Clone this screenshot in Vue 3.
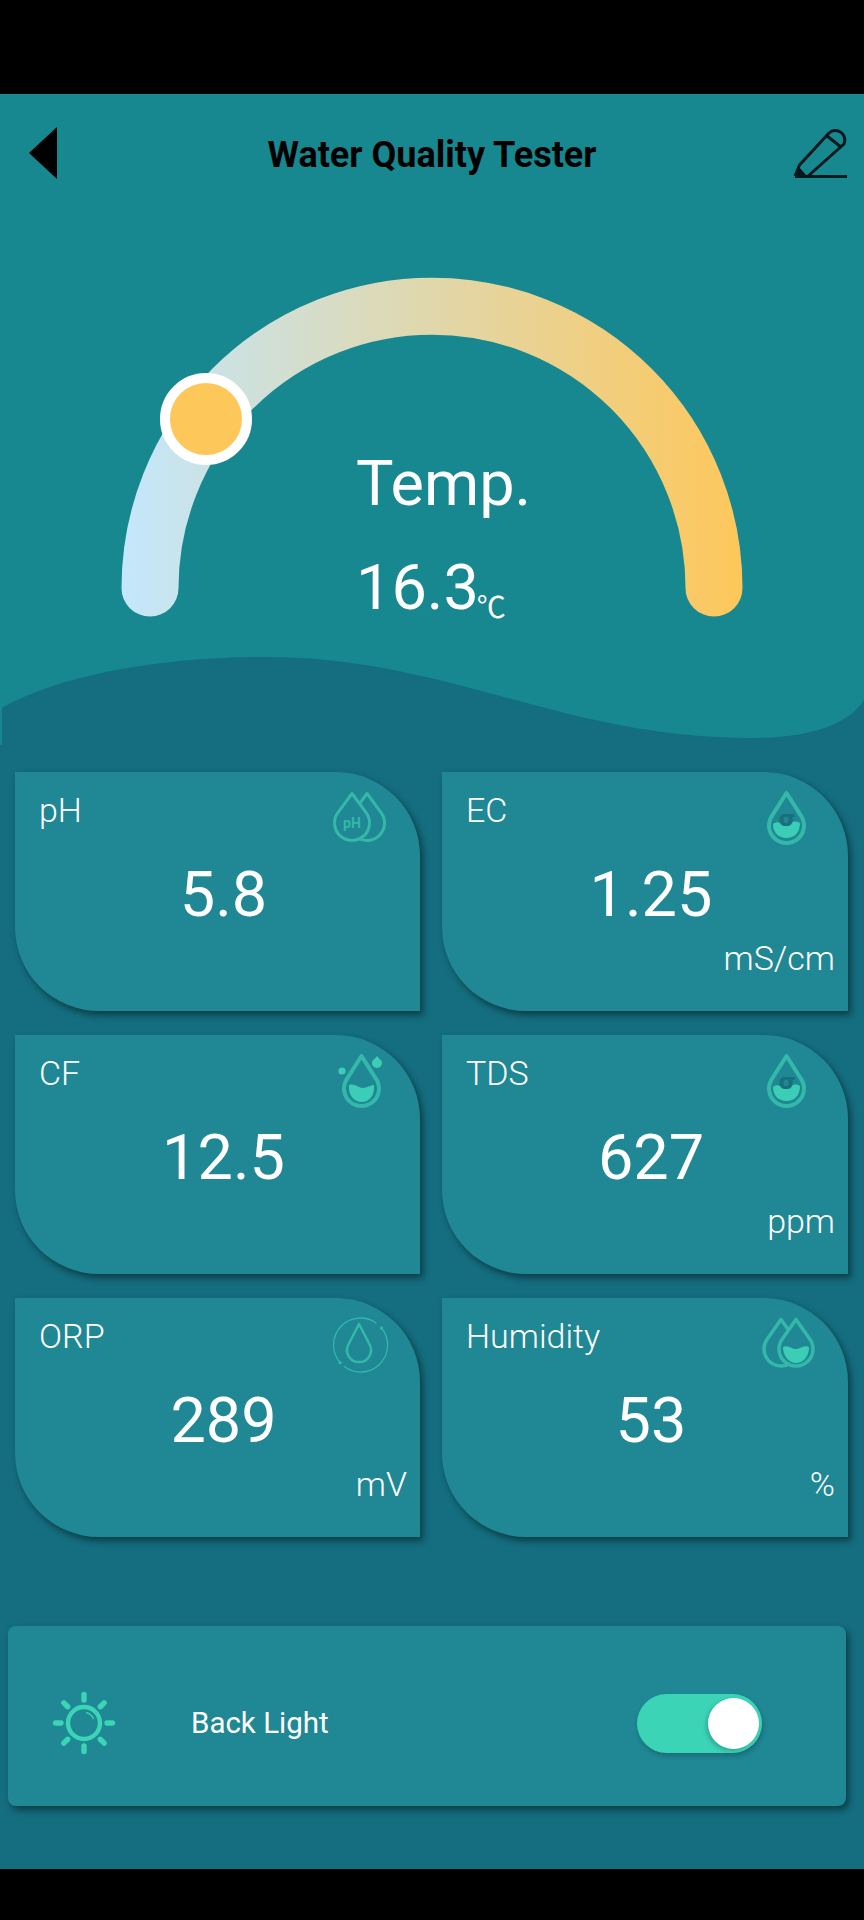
<template>
  <div class="phone">
    <div class="screen">
      <section class="hero">
        <header class="topbar">
          <svg class="back" width="28" height="52" viewBox="0 0 28 52">
            <path d="M28 0V52L0 26Z" fill="#000" />
          </svg>
          <h1>Water Quality Tester</h1>
          <svg class="edit" width="56" height="54" viewBox="794 126 56 54" fill="none" stroke="#04191c" stroke-width="3" stroke-linejoin="round">
            <path d="M796 176 L800.5 165 L830 133 A9.5 9.5 0 0 1 845 144 L808 177" />
            <path d="M828 136 L842 147 M796 176.5 H848" />
            <path d="M796 176 L800 167 L808 176Z" fill="#04191c" stroke="none" />
          </svg>
        </header>
        <div class="gauge">
          <svg width="864" height="445" viewBox="0 212 864 445">
            <defs>
              <linearGradient id="arcFill" gradientUnits="userSpaceOnUse" x1="122" y1="0" x2="743" y2="0">
                <stop offset="0" stop-color="#c3e7fc" />
                <stop offset="1" stop-color="#fec75a" />
              </linearGradient>
            </defs>
            <path d="M150 588 A282 282 0 0 1 714 588" fill="none" stroke="url(#arcFill)" stroke-width="57" stroke-linecap="round" />
            <circle cx="206" cy="419" r="41" fill="#fec75a" stroke="#fff" stroke-width="10" />
          </svg>
          <div class="readout">
            <div>Temp.</div>
            <div>16.3<span class="deg">℃</span></div>
          </div>
        </div>
      </section>

      <svg class="wave" width="864" height="115" viewBox="0 657 864 115">
        <path d="M0 657 H864 V700 C850 722 815 738 752 738 C560 738 450 657 264 657 C160 657 60 675 2 708 V745 H0 Z" fill="#17888f" />
      </svg>

      <div class="cards">
        <div class="card" v-for="c in cards" :key="c.label">
          <div class="label">{{ c.label }}</div>
          <div class="value">{{ c.value }}</div>
          <div class="unit">{{ c.unit }}</div>

          <svg class="icon" width="70" height="70" viewBox="0 0 70 70" fill="none" stroke="#33b8a9" stroke-width="3" stroke-linejoin="round">
            <template v-if="c.icon === 'ph'">
              <path d="M33.5 21.7 L41 11.5 L55.1 30.6 A17.5 17.5 0 0 1 32 56" />
              <path :d="drop(26, 11.5, 17.5, 41)" />
              <text x="26" y="46" class="ph-mark">pH</text>
            </template>

            <template v-else-if="c.icon === 'sigma'">
              <path :d="drop(32.5, 11, 17.5, 43.5)" stroke-width="4" />
              <path d="M19 42 C25 37 27 44 33 42 C38 40 41 38 46 41 C46 51 40 56 32.5 56 C25 56 19 51 19 42Z" fill="#3bcdb5" stroke="none" />
              <text x="33" y="44" class="sigma">σ</text>
            </template>

            <template v-else-if="c.icon === 'rain'">
              <path :d="drop(35.5, 11, 17.5, 43.5)" stroke-width="4" />
              <path d="M23 40 C29 38 32 43 37 43 C41 43 44 40 48 40 C49 51 43 57 35.5 57 C28 57 22 50 23 40Z" fill="#3bcdb5" stroke="none" />
              <circle cx="16" cy="26" r="3.6" fill="#3bcdb5" stroke="none" />
              <path d="M51 11 C53 14 56 15 56 18 A5 5 0 0 1 46 18 C46 15 49 14 51 11Z" fill="#3bcdb5" stroke="none" />
            </template>

            <template v-else-if="c.icon === 'ring'">
              <path :d="drop(33, 16, 12, 42)" stroke-width="2.5" />
              <path d="M50.4 15.2 A27 27 0 0 0 14.1 54.7 M17.9 58.3 A27 27 0 0 0 55.5 20" stroke-width="1.3" />
              <circle cx="14.1" cy="54.7" r="1.6" fill="#33b8a9" stroke="none" />
              <circle cx="55.5" cy="20" r="1.6" fill="#33b8a9" stroke="none" />
            </template>

            <template v-else>
              <path d="M34.5 22.1 L27 11.5 L13.1 31.2 A17 17 0 0 0 36 55.4" stroke-width="3.5" />
              <path :d="drop(42, 11.5, 17, 41)" stroke-width="3.5" />
              <path d="M29 39 C35 36 38 42 43 41 C47 40 51 37 55 39 C55 49 49 55 42 55 C35 55 29 48 29 39Z" fill="#3bcdb5" stroke="none" />
            </template>
          </svg>
        </div>
      </div>

      <div class="light-panel">
        <svg class="sun" width="64" height="64" viewBox="-32 -32 64 64" fill="none" stroke="#3bd4b6">
          <circle r="16" stroke-width="4.4" />
          <path d="M2 -10.5 A10.5 10.5 0 0 1 9.5 -4" stroke-width="1.4" />
          <g stroke-width="5.4" stroke-linecap="round">
            <path v-for="a in rays" :key="a" d="M0 -23 V-28.5" :transform="`rotate(${a})`" />
          </g>
        </svg>
        <span class="light-label">Back Light</span>
        <div class="switch">
          <div class="knob"></div>
        </div>
      </div>
    </div>
  </div>
</template>

<script setup>
const cards = [
  { label: 'pH', value: '5.8', unit: '', icon: 'ph' },
  { label: 'EC', value: '1.25', unit: 'mS/cm', icon: 'sigma' },
  { label: 'CF', value: '12.5', unit: '', icon: 'rain' },
  { label: 'TDS', value: '627', unit: 'ppm', icon: 'sigma' },
  { label: 'ORP', value: '289', unit: 'mV', icon: 'ring' },
  { label: 'Humidity', value: '53', unit: '%', icon: 'double' }
]

const rays = [0, 45, 90, 135, 180, 225, 270, 315]

// water drop outline: straight sides from the tip into a round bottom
const drop = (x, top, r, cy) => {
  const s = r / (cy - top)
  const c = Math.sqrt(1 - s * s)
  const dx = (r * c).toFixed(1)
  const y = (cy - r * s).toFixed(1)
  return `M${x} ${top} L${x - dx} ${y} A${r} ${r} 0 1 0 ${x + Number(dx)} ${y}Z`
}
</script>

<style>
body {
  background: #000;
}
</style>

<style scoped>
.phone {
  height: 1920px;
  padding: 94px 0 51px;
  box-sizing: border-box;
  background: #000;
  font-family: Roboto, "Noto Sans", sans-serif;
  color: #fff;
}
.screen {
  height: 1775px;
  background: #146e7f;
}
.hero {
  background: #17888f;
}
.topbar {
  height: 118px;
  padding: 0 16px;
  display: grid;
  grid-template-columns: 1fr auto 1fr;
  align-items: center;
}
.back {
  margin-left: 13px;
}
.edit {
  justify-self: end;
  margin-right: -1px;
}
h1 {
  margin: 4px 0 0;
  font-size: 36px;
  font-weight: 700;
  color: #000;
}
.gauge {
  position: relative;
  height: 445px;
}
.gauge svg {
  display: block;
}
.readout {
  position: absolute;
  left: 356px;
  top: 240px;
  display: flex;
  flex-direction: column;
  gap: 41px;
  font-size: 63px;
  line-height: 1;
}
.deg {
  font-family: "Noto Sans CJK SC", sans-serif;
  font-size: 29px;
  margin-left: -2px;
  line-height: 0;
  position: relative;
  top: 9px;
}
.wave {
  display: block;
}
.cards {
  padding: 0 16px 0 15px;
  display: grid;
  grid-template-columns: 405px 406px;
  column-gap: 22px;
  row-gap: 24px;
}
.card {
  position: relative;
  height: 239px;
  padding: 21px 13px 0 24px;
  box-sizing: border-box;
  background: #208794;
  border-radius: 0 84px 0 84px;
  box-shadow: 3px 4px 7px rgba(0, 0, 0, 0.45);
}
.label {
  font-size: 34px;
  line-height: 1;
  font-weight: 300;
}
.value {
  margin-top: 36px;
  margin-left: 1px;
  font-size: 63px;
  line-height: 1;
  text-align: center;
}
.unit {
  margin-top: 15px;
  min-height: 34px;
  font-size: 34px;
  line-height: 1;
  font-weight: 300;
  text-align: right;
}
.icon {
  position: absolute;
  top: 10px;
  right: 24px;
}
.ph-mark {
  fill: #33b8a9;
  stroke: none;
  font-size: 14px;
  font-weight: 700;
  text-anchor: middle;
}
.sigma {
  fill: #17707c;
  stroke: none;
  font-family: "DejaVu Sans", sans-serif;
  font-size: 22px;
  font-weight: 700;
  text-anchor: middle;
}
.light-panel {
  margin: 89px 18px 0 8px;
  height: 180px;
  padding: 14px 84px 0 44px;
  box-sizing: border-box;
  display: flex;
  align-items: center;
  background: #208794;
  border-radius: 8px;
  box-shadow: 3px 4px 7px rgba(0, 0, 0, 0.45);
}
.light-label {
  margin-left: 75px;
  font-size: 29.5px;
}
.switch {
  position: relative;
  margin-left: auto;
  width: 125px;
  height: 59px;
  border-radius: 30px;
  background: #3bd4b6;
  box-shadow: 1px 3px 5px rgba(0, 0, 0, 0.2);
}
.knob {
  position: absolute;
  top: 4px;
  right: 3px;
  width: 51px;
  height: 51px;
  border-radius: 50%;
  background: #fff;
  box-shadow: -2px 2px 4px rgba(0, 0, 0, 0.2);
}
</style>
